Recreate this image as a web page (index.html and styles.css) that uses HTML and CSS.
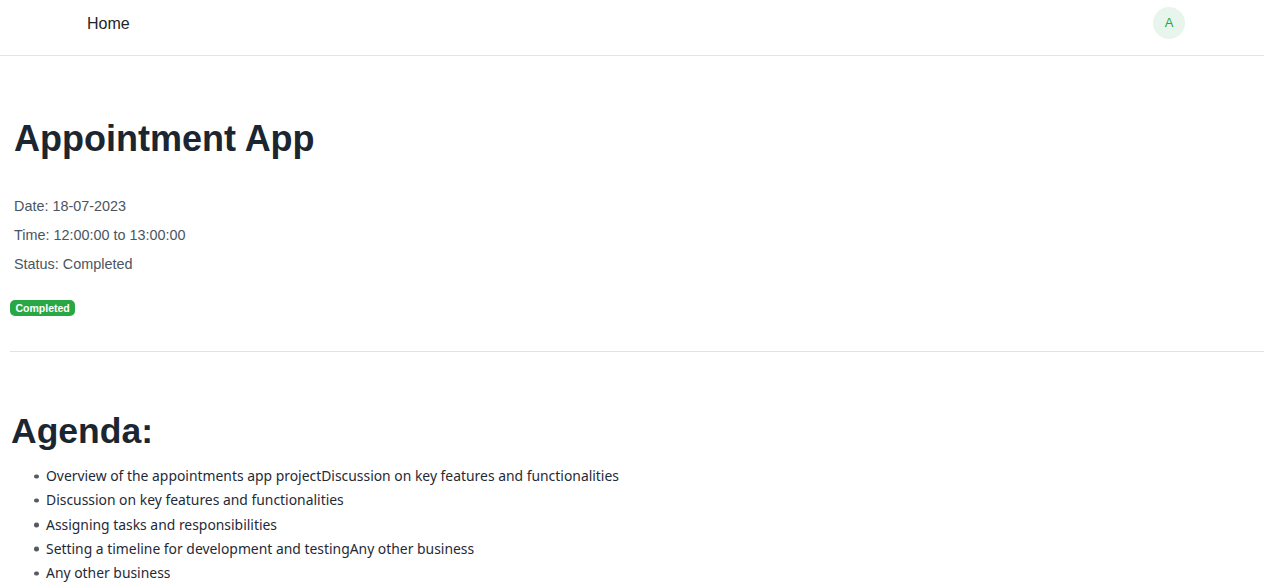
FILE: index.html
```html
<!DOCTYPE html>
<html>
<head>
<meta charset="utf-8">
<link rel="stylesheet" href="styles.css">
</head>
<body>
<nav class="nav">
  <a class="nav-link" href="#">Home</a>
  <div class="avatar">A</div>
</nav>
<main class="main">
  <section class="details">
    <h1 class="title">Appointment App</h1>
    <p class="meta">Date: 18-07-2023</p>
    <p class="meta">Time: 12:00:00 to 13:00:00</p>
    <p class="meta">Status: Completed</p>
    <span class="badge">Completed</span>
  </section>
  <hr class="divider">
  <section class="agenda">
    <h2 class="agenda-title">Agenda:</h2>
    <ul class="agenda-list">
      <li>Overview of the appointments app projectDiscussion on key features and functionalities</li>
      <li>Discussion on key features and functionalities</li>
      <li>Assigning tasks and responsibilities</li>
      <li>Setting a timeline for development and testingAny other business</li>
      <li>Any other business</li>
    </ul>
  </section>
</main>
</body>
</html>
```
FILE: styles.css
```css
* { box-sizing: border-box; }
body {
  margin: 0;
  font-family: "Liberation Sans", Arial, sans-serif;
  color: #212529;
  background: #fff;
}
.nav {
  height: 56px;
  border-bottom: 1px solid #e5e5e5;
  display: flex;
  align-items: center;
  justify-content: space-between;
  padding: 0 79px 0 87px;
}
.nav-link {
  color: #212529;
  text-decoration: none;
  font-size: 16px;
  margin-top: -8px;
}
.avatar {
  width: 32px;
  height: 32px;
  border-radius: 50%;
  background: #e8f5ec;
  color: #28a745;
  font-size: 13px;
  display: flex;
  align-items: center;
  justify-content: center;
  margin-top: -10px;
}
.main {
  padding: 0 0 0 10px;
}
.details {
  padding-top: 61px;
}
.title {
  margin: 0 0 0 4px;
  font-size: 36px;
  font-weight: 700;
  color: #1b2631;
  line-height: 44px;
}
.meta {
  margin: 0 0 0 4px;
  font-size: 14.4px;
  color: #4a5561;
  line-height: 29px;
}
.title + .meta { margin-top: 31px; }
.badge {
  display: inline-block;
  margin-top: 21px;
  background: #28a745;
  color: #fff;
  font-size: 10.5px;
  font-weight: 700;
  padding: 2px 5.5px;
  border-radius: 5px;
  line-height: 12px;
}
.divider {
  border: 0;
  border-top: 1px solid #e2e2e2;
  margin: 35px 0 0 0;
}
.agenda { padding-top: 59px; }
.agenda-title {
  margin: 0 0 0 1px;
  font-size: 35.5px;
  font-weight: 700;
  color: #1b2631;
  line-height: 40px;
}
.agenda-list {
  margin: 13px 0 0 0;
  padding-left: 36px;
  font-family: "Noto Sans", sans-serif;
  font-size: 13.9px;
  line-height: 24.3px;
  color: #1f2a36;
  list-style: none;
}
.agenda-list li {
  display: flex;
  align-items: baseline;
}
.agenda-list li::before {
  content: "";
  flex: none;
  width: 4.5px;
  height: 4.5px;
  border-radius: 50%;
  background: #555b62;
  margin: 0 7.5px 0 -12px;
  transform: translateY(-2.5px);
}
```
